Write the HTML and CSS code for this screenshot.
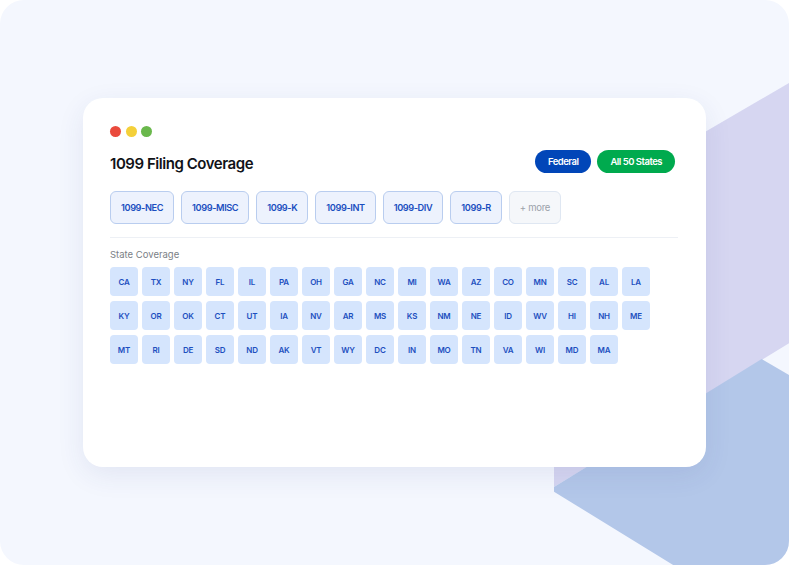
FILE: index.html
```html
<!DOCTYPE html>
<html lang="en">
<head>
    <meta charset="UTF-8">
    <meta name="viewport" content="width=device-width, initial-scale=1.0">
    <title>1099 Filing Coverage</title>
    <link rel="stylesheet" href="styles.css">
</head>
<body>
    <div class="frame">
        <!-- background shapes -->
        <svg class="backdrop" width="789" height="565" viewBox="0 0 789 565">
            <polygon points="554,220 800,76.6 800,336.5 554,487" fill="#d6d6f1"/>
            <polygon points="554,487 761.7,359 800,381.5 800,600 730,600 554,491.7" fill="#b3c7e9"/>
        </svg>

        <div class="card">
            <div class="dots">
                <span class="dot red"></span>
                <span class="dot yellow"></span>
                <span class="dot green"></span>
            </div>

            <div class="card-header">
                <h1>1099 Filing Coverage</h1>
                <div class="badges">
                    <span class="badge federal">Federal</span>
                    <span class="badge states">All 50 States</span>
                </div>
            </div>

            <div class="forms" id="forms"></div>

            <div class="divider"></div>

            <div class="section-label">State Coverage</div>
            <div class="state-grid" id="state-grid"></div>
        </div>
    </div>

    <script>
        const forms = ['1099-NEC', '1099-MISC', '1099-K', '1099-INT', '1099-DIV', '1099-R'];
        const states = [
            'CA', 'TX', 'NY', 'FL', 'IL', 'PA', 'OH', 'GA', 'NC', 'MI', 'WA', 'AZ', 'CO', 'MN', 'SC', 'AL', 'LA',
            'KY', 'OR', 'OK', 'CT', 'UT', 'IA', 'NV', 'AR', 'MS', 'KS', 'NM', 'NE', 'ID', 'WV', 'HI', 'NH', 'ME',
            'MT', 'RI', 'DE', 'SD', 'ND', 'AK', 'VT', 'WY', 'DC', 'IN', 'MO', 'TN', 'VA', 'WI', 'MD', 'MA'
        ];

        const formList = document.getElementById('forms');
        forms.forEach(name => {
            const chip = document.createElement('span');
            chip.className = 'form-chip';
            chip.textContent = name;
            formList.appendChild(chip);
        });
        const more = document.createElement('span');
        more.className = 'form-chip more';
        more.textContent = '+ more';
        formList.appendChild(more);

        const grid = document.getElementById('state-grid');
        states.forEach(code => {
            const tile = document.createElement('span');
            tile.className = 'state-tile';
            tile.textContent = code;
            grid.appendChild(tile);
        });
    </script>
</body>
</html>
```

FILE: styles.css
```css
body {
    margin: 0;
    background-color: #ffffff;
    font-family: 'Inter', 'Liberation Sans', sans-serif;
}
.frame {
    position: relative;
    width: 789px;
    height: 565px;
    background-color: #f4f7fe;
    border-radius: 24px;
    overflow: hidden;
    padding: 98px 0 0 83px;
    box-sizing: border-box;
}
.backdrop {
    position: absolute;
    top: 0;
    left: 0;
}
.card {
    position: relative;
    width: 623px;
    height: 369px;
    box-sizing: border-box;
    padding: 28px 28px 0 27px;
    background-color: #ffffff;
    border-radius: 20px;
    box-shadow: 0 8px 28px rgba(40, 60, 130, 0.09);
}
.dots {
    display: flex;
    gap: 4.5px;
}
.dot {
    width: 11px;
    height: 11px;
    border-radius: 50%;
}
.red { background-color: #ea4a3d; }
.yellow { background-color: #f4d03a; }
.green { background-color: #6ab84c; }
.card-header {
    display: flex;
    justify-content: space-between;
    align-items: center;
    margin-top: 12px;
    padding-right: 3px;
}
h1 {
    margin: 0;
    padding-top: 5px;
    font-size: 15px;
    font-weight: 600;
    color: #111318;
    letter-spacing: -0.45px;
}
.badges {
    display: flex;
    gap: 6px;
}
.badge {
    height: 23px;
    line-height: 23px;
    padding: 0 13px;
    border-radius: 12px;
    font-size: 9.5px;
    font-weight: 600;
    color: #ffffff;
    letter-spacing: -0.5px;
}
.federal { background-color: #0146b8; }
.states { background-color: #00aa4e; }
.forms {
    display: flex;
    gap: 7px;
    margin-top: 18px;
}
.form-chip {
    height: 33px;
    line-height: 31px;
    box-sizing: border-box;
    padding: 0 10px;
    border: 1px solid #b9cdef;
    border-radius: 6px;
    background-color: #edf2fd;
    color: #1a4ec0;
    font-size: 9.2px;
    font-weight: 600;
    letter-spacing: -0.4px;
}
.form-chip.more {
    background-color: #f5f7fa;
    border-color: #dfe7f2;
    color: #9ba1aa;
    font-weight: 400;
    font-size: 9.5px;
    letter-spacing: -0.3px;
}
.divider {
    height: 1px;
    background-color: #edf0f5;
    margin-top: 13px;
}
.section-label {
    margin-top: 11px;
    font-size: 9.5px;
    color: #7b7f86;
}
.state-grid {
    display: grid;
    grid-template-columns: repeat(17, 28px);
    grid-auto-rows: 29px;
    column-gap: 4px;
    row-gap: 5px;
    margin-top: 7px;
}
.state-tile {
    display: flex;
    align-items: center;
    justify-content: center;
    background-color: #d5e5fd;
    border-radius: 4px;
    color: #1d4fbf;
    font-size: 8px;
    font-weight: 600;
    letter-spacing: -0.2px;
}
```
